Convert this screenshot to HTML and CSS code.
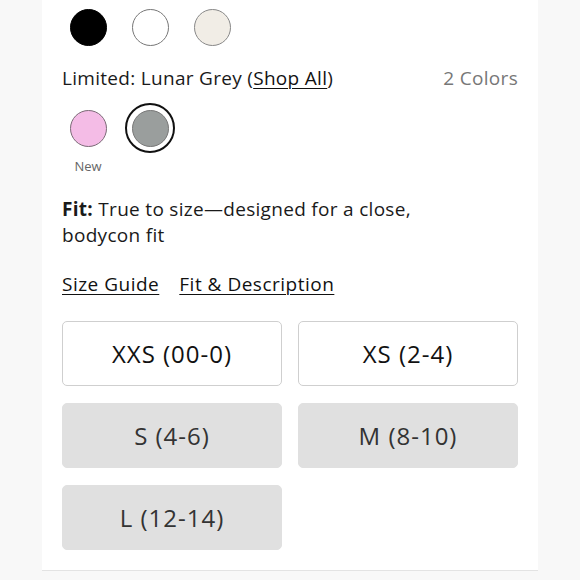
FILE: index.html
```html
<!DOCTYPE html>
<html>
<head>
<meta charset="utf-8">
<link rel="stylesheet" href="styles.css">
</head>
<body>
<div class="page">
  <div class="swatches">
    <span class="swatch"><span class="dot black"></span></span>
    <span class="swatch"><span class="dot white"></span></span>
    <span class="swatch"><span class="dot ivory"></span></span>
  </div>
  <div class="color-head">
    <span class="color-name">Limited: Lunar Grey (<a href="#" class="link">Shop All</a>)</span>
    <span class="count">2 Colors</span>
  </div>
  <div class="swatches second">
    <div class="sw-col">
      <span class="swatch"><span class="dot pink"></span></span>
      <span class="new">New</span>
    </div>
    <div class="sw-col">
      <span class="swatch selected"><span class="dot grey"></span></span>
    </div>
  </div>
  <p class="fit"><b>Fit:</b> True to size—designed for a close,<br>bodycon fit</p>
  <div class="links">
    <a href="#" class="link">Size Guide</a>
    <a href="#" class="link">Fit &amp; Description</a>
  </div>
  <div class="sizes">
    <button class="size avail">XXS (00-0)</button>
    <button class="size avail">XS (2-4)</button>
    <button class="size out">S (4-6)</button>
    <button class="size out">M (8-10)</button>
    <button class="size out">L (12-14)</button>
  </div>
</div>
</body>
</html>
```
FILE: styles.css
```css
html, body {
  margin: 0;
  padding: 0;
  background: #f8f8f8;
}
body {
  font-family: "Open Sans", "Liberation Sans", sans-serif;
  color: #1a1a1a;
}
.page {
  width: 456px;
  margin-left: 42px;
  padding: 2px 20px 20px;
  background: #fff;
  border-bottom: 1px solid #e3e3e3;
}
.swatches {
  display: flex;
  gap: 12px;
  margin-left: 1px;
}
.swatches.second {
  margin-top: 13px;
}
.sw-col {
  display: flex;
  flex-direction: column;
  align-items: center;
}
.swatch {
  width: 50px;
  height: 50px;
  box-sizing: border-box;
  border-radius: 50%;
  display: flex;
  align-items: center;
  justify-content: center;
}
.swatch.selected {
  border: 2px solid #111;
}
.dot {
  width: 37px;
  height: 37px;
  box-sizing: border-box;
  border-radius: 50%;
  border: 1px solid #777;
}
.dot.black { background: #000; border-color: #000; }
.dot.white { background: #fff; border-color: #777; }
.dot.ivory { background: #f1ede6; border-color: #888; }
.dot.pink { background: #f4bce6; border-color: #7a6a76; }
.dot.grey { background: #9a9e9d; border-color: #777; }
.color-head {
  display: flex;
  justify-content: space-between;
  margin-top: 14px;
  font-size: 19px;
  line-height: 24px;
  letter-spacing: 0.3px;
}
.count {
  color: #777;
}
.link {
  color: #111;
  text-decoration: underline;
  text-underline-offset: 3px;
  text-decoration-thickness: 1px;
}
.new {
  margin-top: 5px;
  font-size: 13px;
  line-height: 16px;
  color: #666;
}
.fit {
  margin: 22px 0 0;
  font-size: 19px;
  line-height: 26px;
  letter-spacing: 0.3px;
}
.fit b {
  font-weight: 700;
}
.links {
  display: flex;
  gap: 20px;
  margin-top: 24px;
  font-size: 19px;
  line-height: 24px;
  letter-spacing: 0.5px;
}
.sizes {
  display: grid;
  grid-template-columns: 1fr 1fr;
  column-gap: 16px;
  row-gap: 17px;
  margin-top: 25px;
}
.size {
  height: 65px;
  border-radius: 5px;
  font-family: inherit;
  font-size: 24px;
  letter-spacing: 1px;
  padding: 0;
}
.size.avail {
  background: #fff;
  border: 1px solid #cfcfcf;
  color: #111;
}
.size.out {
  background: #e0e0e0;
  border: 1px solid #e0e0e0;
  color: #333;
}
```
